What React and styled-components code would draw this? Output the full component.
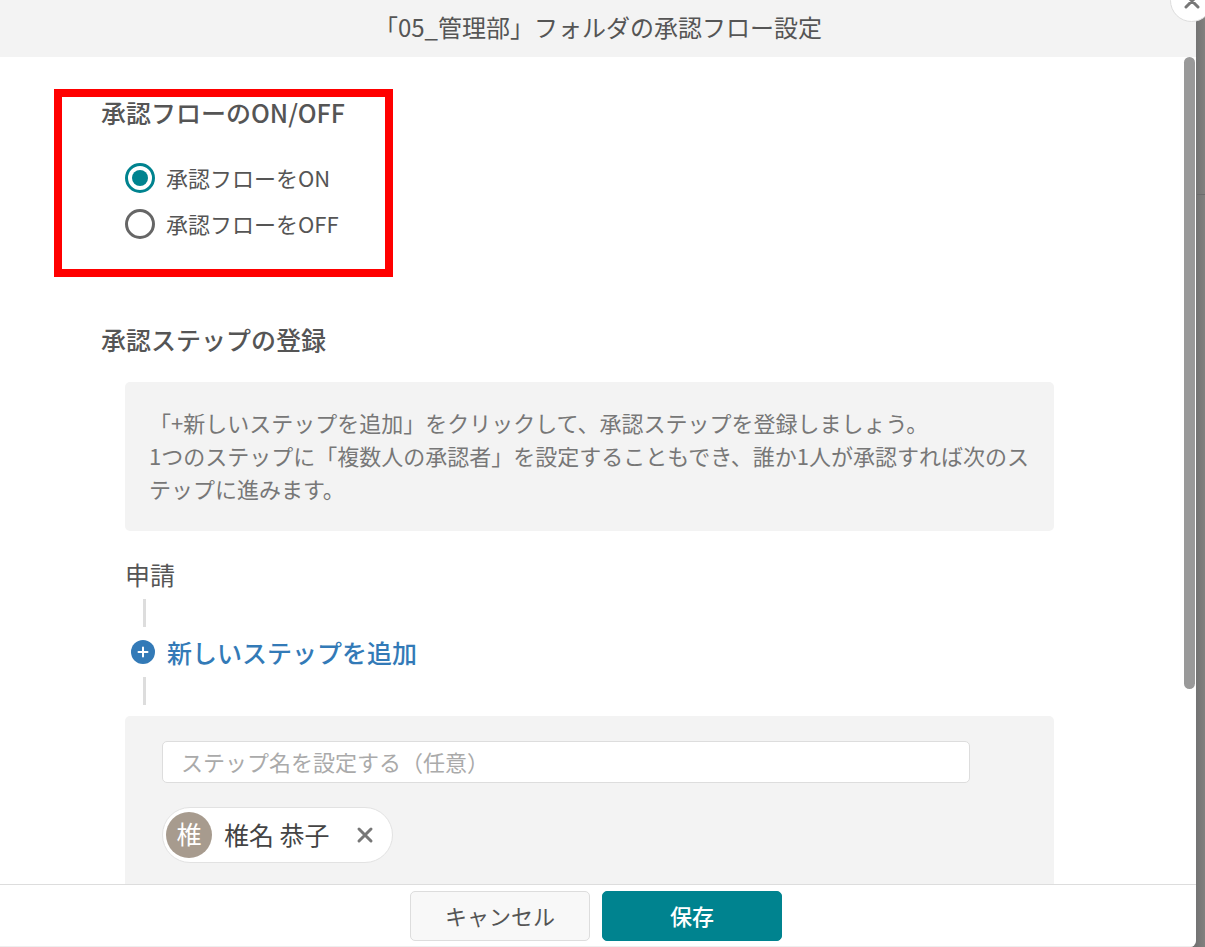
import React, { useState } from 'react';
import styled, { createGlobalStyle } from 'styled-components';

const GlobalStyle = createGlobalStyle`
  * {
    box-sizing: border-box;
  }

  body {
    margin: 0;
    overflow: hidden;
    color: #555;
    font-family: 'Noto Sans CJK JP', sans-serif;
    font-size: 22px;
  }

  button, input {
    font-family: inherit;
    font-size: inherit;
    color: inherit;
  }
`;

const Backdrop = styled.div`
  height: 100vh;
  padding-right: 9px;
  background:
    linear-gradient(#6c6c6c, #6c6c6c) right 194px / 8px 1px no-repeat,
    linear-gradient(to left, #82817f, #737373 9px);
`;

const Modal = styled.div`
  display: flex;
  flex-direction: column;
  height: 100%;
  background-color: #fff;
  border-bottom-right-radius: 6px;
  overflow: hidden;
`;

const Header = styled.header`
  flex: none;
  padding: 11px 0 14px;
  background-color: #f3f3f3;
  text-align: center;
`;

const Title = styled.h1`
  margin: 0;
  font-size: 24px;
  font-weight: 400;
  line-height: 32px;
`;

const CloseButton = styled.button`
  display: flex;
  position: absolute;
  top: -21px;
  right: -8px;
  align-items: center;
  justify-content: center;
  width: 43px;
  height: 43px;
  padding: 0;
  border: 1px solid #ddd;
  border-radius: 50%;
  background-color: #fff;
  cursor: pointer;
`;

const Body = styled.div`
  display: flex;
  flex: 1;
  min-height: 0;
`;

const Content = styled.main`
  flex: 1;
  padding: 40px 130px 0 101px;
  overflow: hidden;
`;

const ScrollTrack = styled.div`
  flex: none;
  width: 12px;
  padding-right: 1px;
`;

const ScrollThumb = styled.div`
  height: 76.4%;
  border-radius: 6px;
  background-color: #999;
`;

const Section = styled.section`
  position: relative;
  margin-bottom: 77px;
`;

const Highlight = styled.div`
  position: absolute;
  top: -8px;
  left: -47px;
  width: 339px;
  height: 188px;
  border: 8px solid #f00;
  pointer-events: none;
`;

const Heading = styled.h2`
  margin: 0;
  font-size: 25px;
  font-weight: 500;
  line-height: 30px;
`;

const Indent = styled.div`
  padding: 28px 0 0 24px;
`;

const RadioLabel = styled.label`
  display: flex;
  align-items: center;
  gap: 11px;
  height: 46px;
  cursor: pointer;

  span {
    padding-bottom: 3px;
  }
`;

const Radio = styled.input`
  display: grid;
  place-content: center;
  appearance: none;
  width: 30px;
  height: 30px;
  margin: 0;
  border: 3px solid #666;
  border-radius: 50%;
  background-color: #fff;

  &:checked {
    border-color: #00838f;
  }

  &:checked::before {
    content: '';
    width: 16px;
    height: 16px;
    border-radius: 50%;
    background-color: #00838f;
  }
`;

const Notice = styled.p`
  margin: 0 0 27px;
  padding: 24px 20px 26px 24px;
  border-radius: 5px;
  background-color: #f3f3f3;
  color: #777;
  line-height: 33px;
`;

const StepTitle = styled.h3`
  margin: 0;
  font-size: 25px;
  font-weight: 400;
  line-height: 32px;
`;

const Connector = styled.div`
  width: 3px;
  height: 28px;
  margin: 9px 0 9px 18px;
  background-color: #ddd;
`;

const AddStepButton = styled.button`
  display: flex;
  align-items: center;
  gap: 12px;
  padding: 0 0 0 6px;
  border: 0;
  background: none;
  color: #337ab7;
  font-size: 25px;
  font-weight: 500;
  line-height: 32px;
  cursor: pointer;
`;

const StepCard = styled.div`
  height: 260px;
  margin-top: 11px;
  padding: 25px 84px 25px 37px;
  border-radius: 5px;
  background-color: #f3f3f3;
`;

const StepNameInput = styled.input`
  display: block;
  width: 100%;
  height: 42px;
  padding: 0 18px 2px;
  border: 1px solid #ddd;
  border-radius: 5px;
  background-color: #fff;

  &::placeholder {
    color: #aaa;
    opacity: 1;
  }
`;

const UserChip = styled.div`
  display: inline-flex;
  align-items: center;
  height: 56px;
  margin-top: 24px;
  padding: 0 18px 0 3px;
  border: 1px solid #e2e2e2;
  border-radius: 28px;
  background-color: #fff;
  color: #444;
  font-size: 25px;
`;

const Avatar = styled.span`
  display: flex;
  align-items: center;
  justify-content: center;
  width: 46px;
  height: 46px;
  margin-right: 12px;
  padding-bottom: 4px;
  border-radius: 50%;
  background-color: #a79b8e;
  color: #fff;
  line-height: 32px;
`;

const UserName = styled.span`
  padding-bottom: 3px;
`;

const RemoveButton = styled.button`
  display: flex;
  margin-left: 26px;
  padding: 0;
  border: 0;
  background: none;
  cursor: pointer;
`;

const Footer = styled.footer`
  display: flex;
  flex: none;
  justify-content: center;
  gap: 12px;
  padding: 6px 4px 5px 0;
  border-top: 1px solid #ddd;
  border-bottom: 1px solid #eee;
`;

const FooterButton = styled.button`
  width: 180px;
  height: 50px;
  padding: 0 0 2px;
  border: 1px solid ${({ $primary }) => ($primary ? '#00838f' : '#ddd')};
  border-radius: 5px;
  background-color: ${({ $primary }) => ($primary ? '#00838f' : '#f8f8f8')};
  color: ${({ $primary }) => ($primary ? '#fff' : '#555')};
  font-weight: ${({ $primary }) => ($primary ? 500 : 400)};
  cursor: pointer;
`;

const CrossIcon = () => (
  <svg width="18" height="18" viewBox="0 0 18 18" fill="none" stroke="#777" strokeWidth="3" strokeLinecap="round">
    <path d="M3 3L15 15M15 3L3 15" />
  </svg>
);

const PlusIcon = () => (
  <svg width="24" height="24" viewBox="0 0 24 24">
    <circle cx="12" cy="12" r="12" fill="#337ab7" />
    <path d="M12 7.5V16.5M7.5 12H16.5" stroke="#fff" strokeWidth="2" strokeLinecap="round" />
  </svg>
);

const App = () => {
  const [flow, setFlow] = useState('on');
  const [stepName, setStepName] = useState('');

  return (
    <Backdrop>
      <GlobalStyle />
      <Modal>
        <Header>
          <Title>「05_管理部」フォルダの承認フロー設定</Title>
        </Header>
        <Body>
          <Content>
            <Section>
              <Heading>承認フローのON/OFF</Heading>
              <Indent>
                <RadioLabel>
                  <Radio type="radio" name="flow" checked={flow === 'on'} onChange={() => setFlow('on')} />
                  <span>承認フローをON</span>
                </RadioLabel>
                <RadioLabel>
                  <Radio type="radio" name="flow" checked={flow === 'off'} onChange={() => setFlow('off')} />
                  <span>承認フローをOFF</span>
                </RadioLabel>
              </Indent>
              <Highlight />
            </Section>
            <Section>
              <Heading>承認ステップの登録</Heading>
              <Indent>
                <Notice>
                  「+新しいステップを追加」をクリックして、承認ステップを登録しましょう。
                  <br />
                  1つのステップに「複数人の承認者」を設定することもでき、誰か1人が承認すれば次のステップに進みます。
                </Notice>
                <StepTitle>申請</StepTitle>
                <Connector />
                <AddStepButton type="button">
                  <PlusIcon />
                  新しいステップを追加
                </AddStepButton>
                <Connector />
                <StepCard>
                  <StepNameInput
                    type="text"
                    aria-label="ステップ名"
                    placeholder="ステップ名を設定する（任意）"
                    value={stepName}
                    onChange={(e) => setStepName(e.target.value)}
                  />
                  <UserChip>
                    <Avatar>椎</Avatar>
                    <UserName>椎名 恭子</UserName>
                    <RemoveButton type="button" aria-label="削除">
                      <CrossIcon />
                    </RemoveButton>
                  </UserChip>
                </StepCard>
              </Indent>
            </Section>
          </Content>
          <ScrollTrack>
            <ScrollThumb />
          </ScrollTrack>
        </Body>
        <Footer>
          <FooterButton type="button">キャンセル</FooterButton>
          <FooterButton type="button" $primary>保存</FooterButton>
        </Footer>
      </Modal>
      <CloseButton type="button" aria-label="閉じる">
        <CrossIcon />
      </CloseButton>
    </Backdrop>
  );
};

export default App;
